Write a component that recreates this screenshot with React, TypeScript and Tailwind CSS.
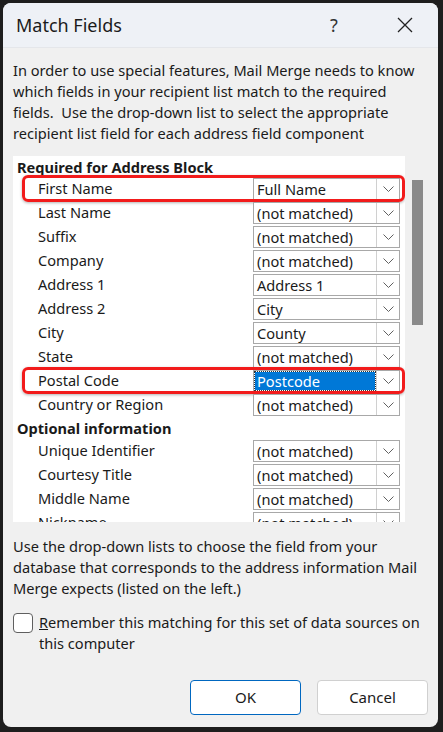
import React from 'react';

type Row = { label: string; value: string; highlight?: boolean; selected?: boolean };

const required: Row[] = [
  { label: 'First Name', value: 'Full Name', highlight: true },
  { label: 'Last Name', value: '(not matched)' },
  { label: 'Suffix', value: '(not matched)' },
  { label: 'Company', value: '(not matched)' },
  { label: 'Address 1', value: 'Address 1' },
  { label: 'Address 2', value: 'City' },
  { label: 'City', value: 'County' },
  { label: 'State', value: '(not matched)' },
  { label: 'Postal Code', value: 'Postcode', highlight: true, selected: true },
  { label: 'Country or Region', value: '(not matched)' },
];

const optional: Row[] = [
  { label: 'Unique Identifier', value: '(not matched)' },
  { label: 'Courtesy Title', value: '(not matched)' },
  { label: 'Middle Name', value: '(not matched)' },
  { label: 'Nickname', value: '(not matched)' },
];

const Chevron = () => (
  <svg width="11" height="6" viewBox="0 0 11 6" fill="none">
    <path d="M0.5 0.5 L5.5 5.5 L10.5 0.5" stroke="#606060" strokeWidth="1" />
  </svg>
);

const Combo = ({ value, selected }: { value: string; selected?: boolean }) => (
  <div className="flex h-[22px] w-[147px] border border-[#a8a8a8] bg-white">
    <div className="flex flex-1 items-center px-[1px]">
      <span
        className={`flex h-[18px] w-full items-center px-[2px] leading-none ${
          selected ? 'bg-[#0078d7] text-white outline outline-1 outline-dotted outline-[#333]' : ''
        }`}
      >
        {value}
      </span>
    </div>
    <div className="flex w-[23px] items-center justify-center border-l border-[#d0d0d0]">
      <Chevron />
    </div>
  </div>
);

const FieldRow = ({ row }: { row: Row }) => (
  <div className="relative flex h-[24px] items-center">
    {row.highlight && (
      <div className="absolute left-[9px] top-[-2px] h-[27px] w-[383px] rounded-[6px] border-[3px] border-[#f21b1b] shadow-[0_1px_3px_rgba(0,0,0,0.3)]" />
    )}
    <span className="w-[240px] pl-[25px]">{row.label}</span>
    <Combo value={row.value} selected={row.selected} />
  </div>
);

export default function App() {
  return (
    <div
      className="h-[732px] w-[443px] bg-[#1e1e1e] pt-[3px] pl-[3px] text-[14.6px] text-[#1a1a1a]"
      style={{ fontFamily: '"Segoe UI", "Noto Sans", "Open Sans", sans-serif' }}
    >
      <div className="flex h-[724px] w-[435px] flex-col overflow-hidden rounded-[8px] bg-[#f0f0f0]">
        {/* title bar */}
        <div className="flex h-[45px] items-center border-b border-[#e4e6ea] bg-[#eef1f6] pl-[13px]">
          <span className="flex-1 text-[18px] text-[#1b1b1b]">Match Fields</span>
          <span className="w-[30px] text-center text-[18px] text-[#333]">?</span>
          <span className="ml-[46px] mr-[23px] flex w-[20px] items-center justify-center">
            <svg width="16" height="16" viewBox="0 0 16 16">
              <path d="M1 1 L15 15 M15 1 L1 15" stroke="#222" strokeWidth="1.3" />
            </svg>
          </span>
        </div>

        <p className="mt-[12px] px-[10px] leading-[21px]">
          In order to use special features, Mail Merge needs to know which fields in your recipient list match to the required
          fields.&nbsp; Use the drop-down list to select the appropriate recipient list field for each address field component
        </p>

        {/* field list */}
        <div className="mt-[12px] flex pl-[10px]">
          <div className="h-[366px] w-[392px] overflow-hidden bg-white">
            <div className="pl-[4px] pt-[1px] font-bold leading-[20px]">Required for Address Block</div>
            {required.map((r) => (
              <FieldRow key={r.label} row={r} />
            ))}
            <div className="pl-[4px] font-bold leading-[22px]">Optional information</div>
            {optional.map((r) => (
              <FieldRow key={r.label} row={r} />
            ))}
          </div>
          <div className="w-[20px] pl-[7px] pt-[24px]">
            <div className="h-[145px] w-[11px] bg-[#8a8a8a]" />
          </div>
        </div>

        <p className="mt-[14px] whitespace-nowrap pl-[10px] leading-[21px]">
          Use the drop-down lists to choose the field from your
          <br />
          database that corresponds to the address information Mail
          <br />
          Merge expects (listed on the left.)
        </p>

        <div className="mt-[13px] flex pl-[10px]">
          <div className="mt-[1px] h-[20px] w-[20px] shrink-0 rounded-[4px] border border-[#5f5f5f] bg-white" />
          <p className="ml-[6px] whitespace-nowrap leading-[21px]">
            <u>R</u>emember this matching for this set of data sources on
            <br />
            this computer
          </p>
        </div>

        <div className="mt-auto mb-[12px] flex justify-end gap-[16px] pr-[10px]">
          <button className="h-[35px] w-[111px] rounded-[4px] border border-[#0067c0] bg-white text-[15px]">OK</button>
          <button className="h-[35px] w-[111px] rounded-[4px] border border-[#d0d0d0] bg-white text-[15px]">Cancel</button>
        </div>
      </div>
    </div>
  );
}
